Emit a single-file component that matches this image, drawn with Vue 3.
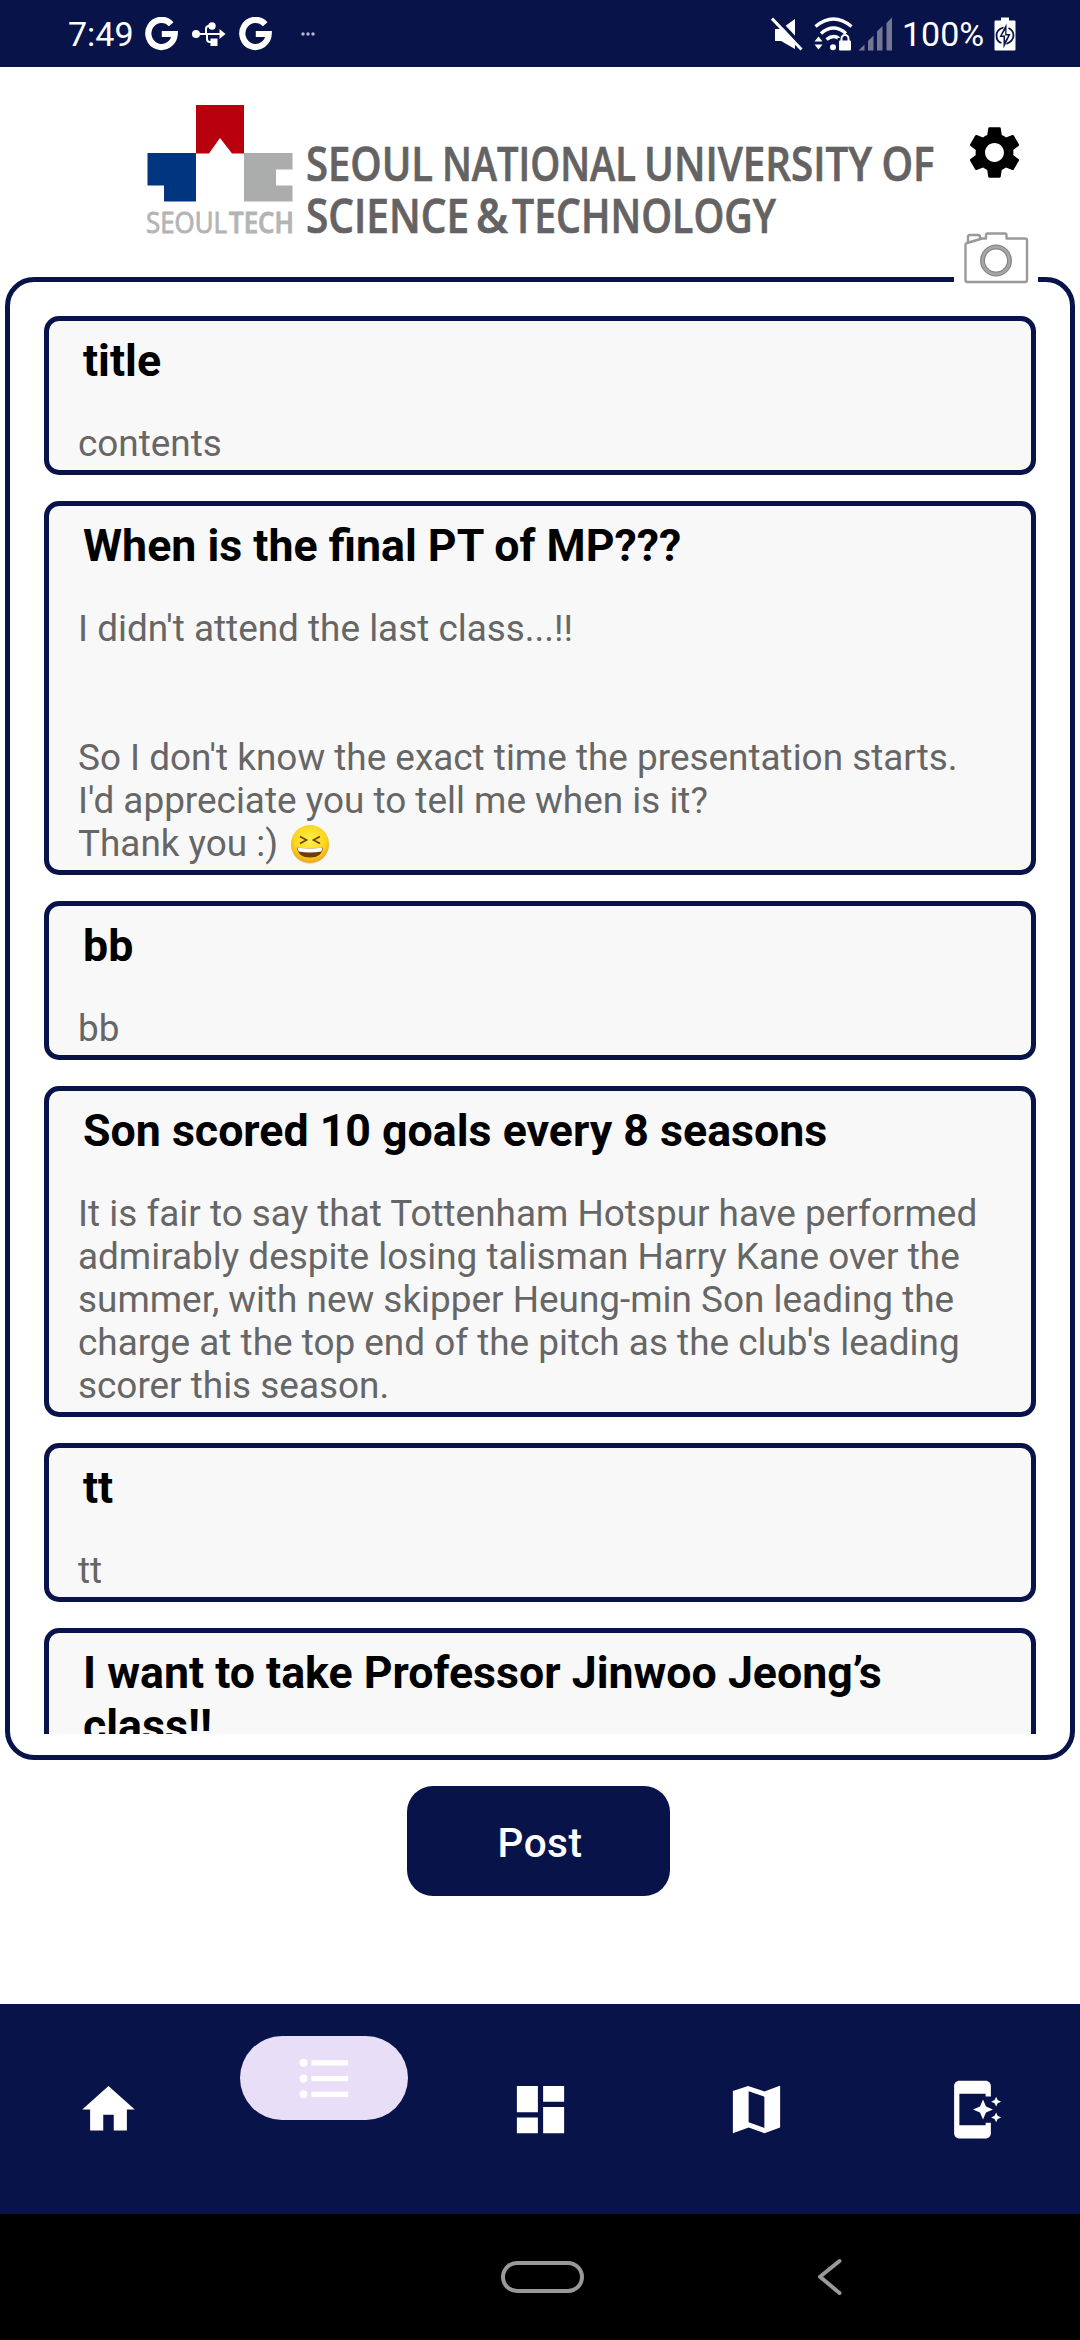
<script setup>
const posts = [
  { title: 'title', lines: ['contents'] },
  {
    title: 'When is the final PT of MP???',
    lines: [
      "I didn't attend the last class...!!",
      '',
      '',
      'So I don\'t know the exact time the presentation starts.',
      "I'd appreciate you to tell me when is it?",
      'Thank you :) '
    ],
    laugh: true
  },
  { title: 'bb', lines: ['bb'] },
  {
    title: 'Son scored 10 goals every 8 seasons',
    lines: [
      'It is fair to say that Tottenham Hotspur have performed',
      'admirably despite losing talisman Harry Kane over the',
      'summer, with new skipper Heung-min Son leading the',
      "charge at the top end of the pitch as the club's leading",
      'scorer this season.'
    ]
  },
  { title: 'tt', lines: ['tt'] },
  { title: 'I want to take Professor Jinwoo Jeong’s class!!', lines: [''] }
]

const tabs = [
  { name: 'home', d: 'M10 20v-6h4v6h5v-8h3L12 3 2 12h3v8z' },
  {
    name: 'list',
    active: true,
    d: 'M4 10.5a1.5 1.5 0 100 3 1.5 1.5 0 000-3zm0-6a1.5 1.5 0 100 3 1.5 1.5 0 000-3zm0 12a1.5 1.5 0 100 3 1.5 1.5 0 000-3zM7 19h14v-2H7v2zm0-6h14v-2H7v2zm0-8v2h14V5H7z'
  },
  { name: 'dashboard', d: 'M3 13h8V3H3v10zm0 8h8v-6H3v6zm10 0h8V11h-8v10zm0-18v6h8V3h-8z' },
  { name: 'map', d: 'M3 4.95L8.8 3 15 5.1 20.6 3a.3.3 0 01.4.3v15.6L15 21l-6-2.1L3 21zM9 5v11.9l6 2.1V7.1z' },
  {
    name: 'phone',
    d: 'M17 18H7V6h10v1h2V3c0-1.1-.9-2-2-2H7c-1.1 0-2 .9-2 2v18c0 1.1.9 2 2 2h10c1.1 0 2-.9 2-2v-4h-2v1zM16 8.2l1.15 2.65L19.8 12l-2.65 1.15L16 15.8l-1.15-2.65L12.2 12l2.65-1.15zM21 7.1l.58 1.32 1.32.58-1.32.58L21 10.9l-.58-1.32L19.1 9l1.32-.58zM21 13.1l.58 1.32 1.32.58-1.32.58L21 16.9l-.58-1.32L19.1 15l1.32-.58z'
  }
]
</script>

<template>
  <div class="screen">
    <div class="status">
      <div class="status-left">
        <span class="time">7:49</span>
        <svg class="g1" width="33" height="34" viewBox="0 0 33 34">
          <path d="M26.2 7.2A13.2 13.6 0 1 0 29.7 17H16.8" fill="none" stroke="#fff" stroke-width="6.2" />
        </svg>
        <svg class="usb" width="34" height="26" viewBox="0 0 34 26">
          <g fill="none" stroke="#fff" stroke-width="2">
            <path d="M4 13H28M14 13V8Q14 5 17 5H19M15 13V18Q15 21 18 21H20" />
          </g>
          <circle cx="4" cy="13" r="4" fill="#fff" />
          <circle cx="20" cy="5" r="3.7" fill="#fff" />
          <rect x="18.5" y="17.5" width="7" height="7.5" fill="#fff" />
          <path d="M27.5 8L33.5 13 27.5 18z" fill="#fff" />
        </svg>
        <svg class="g2" width="33" height="34" viewBox="0 0 33 34">
          <path d="M26.2 7.2A13.2 13.6 0 1 0 29.7 17H16.8" fill="none" stroke="#fff" stroke-width="6.2" />
        </svg>
        <svg class="more" width="14" height="4" viewBox="0 0 14 4" fill="#b5b9ca">
          <circle cx="2" cy="2" r="1.7" /><circle cx="7" cy="2" r="1.7" /><circle cx="12" cy="2" r="1.7" />
        </svg>
      </div>
      <div class="status-right">
        <svg width="32" height="34" viewBox="0 0 32 34">
          <path d="M4 12H10L24 2V32L10 24H4z" fill="#fff" />
          <path d="M3 -1.2L34 32" stroke="#08134a" stroke-width="3.5" />
          <path d="M1 1.5L30.5 32.5" stroke="#fff" stroke-width="3" />
        </svg>
        <svg class="wifi" width="39" height="34" viewBox="0 0 39 34">
          <g fill="none" stroke="#fff" stroke-width="3.4">
            <path d="M1.5 9.5Q19.5 -5.5 37.5 9.5M7 16.5Q19.5 5.5 32 16.5M12.5 22.5Q19.5 17 25 21.5" />
          </g>
          <circle cx="19" cy="30.2" r="3" fill="#fff" />
          <path d="M0.5 24.5L4.5 19.5 8.5 24.5zM0.5 27.5L4.5 32.5 8.5 27.5z" fill="#fff" />
          <rect x="23.5" y="21" width="14.5" height="13" fill="#08134a" />
          <rect x="25" y="23.5" width="12" height="10" rx="1" fill="#fff" />
          <path d="M27.5 24v-2.500a3.500 3.500 0 017 0V24" fill="none" stroke="#fff" stroke-width="2" />
        </svg>
        <svg class="signal" width="35" height="34" viewBox="0 0 35 34" fill="#727894">
          <path d="M0.5 33.5L6.5 27.5V33.5zM10 33.5V24L15.5 18.5V33.5zM19 33.5V14.5L24.5 9V33.5zM28.5 33.5V6L34 0.5V33.5z" />
        </svg>
        <span class="percent">100%</span>
        <svg class="battery" width="22" height="34" viewBox="0 0 22 34">
          <path d="M7 0.5H15V3.5H20.5Q21.5 3.5 21.5 4.5V32.5Q21.5 33.5 20.5 33.5H1.5Q.5 33.5.5 32.5V4.5Q.5 3.5 1.5 3.5H7z" fill="#fff" />
          <g fill="none" stroke="#08134a" stroke-width="1.8">
            <path d="M9.5 10.5Q2.500 12.500 2.500 18.500T7.500 26M14.500 11Q19.500 13.500 19.500 18.500T12.500 27" />
          </g>
          <path d="M12.500 6.500L5.500 20H9.500L9.500 31.500 16.500 17H12.500z" fill="#08134a" />
          <path d="M11.200 13L7.800 18.600H11V24L14.200 18.400H11.200z" fill="#fff" />
        </svg>
      </div>
    </div>

    <header class="header">
      <svg class="logo" width="800" height="190" viewBox="140 67 800 190">
        <path d="M196 105H244V153.500H232L220 138 209 153.500H196z" fill="#b8000e" />
        <path d="M147.500 153H196V201.500H164V185.500H147.500z" fill="#003580" />
        <path d="M244 153H292.500V169.500H276V185.500H292.500V201.500H244z" fill="#abadac" />
        <g class="mark">
          <text x="146" y="233" textLength="81" lengthAdjust="spacingAndGlyphs">SEOUL</text>
          <text x="229" y="233" textLength="65" lengthAdjust="spacingAndGlyphs" class="strong">TECH</text>
        </g>
        <g class="name">
          <text x="306" y="181" textLength="127" lengthAdjust="spacingAndGlyphs">SEOUL</text>
          <text x="442" y="181" textLength="194" lengthAdjust="spacingAndGlyphs">NATIONAL</text>
          <text x="644" y="181" textLength="228" lengthAdjust="spacingAndGlyphs">UNIVERSITY</text>
          <text x="881.500" y="181" textLength="53" lengthAdjust="spacingAndGlyphs">OF</text>
          <text x="306" y="232.500" textLength="163" lengthAdjust="spacingAndGlyphs">SCIENCE</text>
          <text x="476" y="232.500" textLength="32" lengthAdjust="spacingAndGlyphs">&amp;</text>
          <text x="512" y="232.500" textLength="264" lengthAdjust="spacingAndGlyphs">TECHNOLOGY</text>
        </g>
      </svg>
      <svg class="gear" width="63" height="63" viewBox="0 0 24 24">
        <path d="M19.140 12.940c.04-.3.060-.61.060-.94 0-.32-.02-.64-.07-.94l2.030-1.580c.18-.14.230-.41.120-.61l-1.920-3.320c-.12-.22-.37-.29-.59-.22l-2.390.96c-.5-.38-1.030-.7-1.620-.94l-.36-2.540c-.04-.24-.24-.41-.48-.41h-3.840c-.24 0-.43.170-.47.410l-.36 2.540c-.59.240-1.130.570-1.620.94l-2.390-.96c-.22-.08-.47 0-.59.220L2.740 8.870c-.12.210-.08.470.12.610l2.030 1.580c-.05.3-.09.630-.09.940s.02.640.07.940l-2.030 1.580c-.18.140-.23.410-.12.610l1.920 3.320c.12.220.37.290.59.220l2.390-.96c.5.380 1.030.7 1.620.94l.36 2.540c.05.240.24.410.48.410h3.840c.24 0 .44-.17.470-.41l.36-2.540c.59-.24 1.130-.56 1.620-.94l2.390.96c.22.080.47 0 .59-.22l1.920-3.320c.12-.22.070-.47-.12-.61l-2.010-1.580zM12 15.600c-1.980 0-3.600-1.620-3.600-3.600s1.620-3.600 3.600-3.600 3.600 1.620 3.600 3.600-1.620 3.600-3.600 3.600z" />
      </svg>
    </header>

    <main class="panel">
      <svg class="camera" width="84" height="62" viewBox="954 228 84 62">
        <rect x="954" y="228" width="84" height="62" fill="#fff" />
        <g fill="none" stroke="#999" stroke-width="2.4" stroke-linejoin="round">
          <path d="M965.500 243.500V280Q965.500 282 967.500 282H1025Q1027 282 1027 280V240.500Q1027 238.500 1025 238.500H1006.500V235Q1006.500 233.500 1005 233.500H987.500Q986 233.500 986 235V238.500H982L965.500 243.500" />
          <path d="M968 242V237Q968 235 970 235H978Q980 235 980 237V239" />
        </g>
        <circle cx="996" cy="260.500" r="13.500" fill="none" stroke="#888" stroke-width="5" />
        <circle cx="996" cy="260.500" r="13.500" fill="none" stroke="#a6a6a6" stroke-width="2.500" />
      </svg>
      <div class="feed">
        <article v-for="post in posts" :key="post.title" class="card">
          <h2 class="title">{{ post.title }}</h2>
          <p v-for="(line, i) in post.lines" :key="i" class="line">{{ line }}<svg
              v-if="post.laugh && i === post.lines.length - 1"
              class="emoji" width="40" height="41" viewBox="0 0 40 41">
              <defs>
                <radialGradient id="face" cx=".5" cy=".4" r=".6">
                  <stop offset="0" stop-color="#fff04a" />
                  <stop offset=".7" stop-color="#fcd51d" />
                  <stop offset="1" stop-color="#eda512" />
                </radialGradient>
              </defs>
              <circle cx="20" cy="21" r="19" fill="#ddd" />
              <circle cx="20" cy="20" r="19" fill="url(#face)" />
              <path d="M10 12.500L16.500 16 10 19.500M30 12.500L23.500 16 30 19.500" fill="none" stroke="#70400c" stroke-width="1.700" />
              <path d="M7 23.500Q20 25.500 33 23.500Q32 33.500 20 33.500T7 23.500z" fill="#6b3d08" />
              <path d="M7.500 23.500Q20 25.500 32.500 23.500L31.500 27.500Q20 29.500 8.500 27.500z" fill="#fff" />
            </svg></p>
        </article>
      </div>
    </main>

    <div class="actions">
      <button class="post">Post</button>
    </div>

    <nav class="tabs">
      <div v-for="tab in tabs" :key="tab.name" class="tab" :class="{ active: tab.active }">
        <span class="pill">
          <svg width="63" height="63" viewBox="0 0 24 24" fill="#fff" fill-rule="evenodd"><path :d="tab.d" /></svg>
        </span>
      </div>
    </nav>

    <div class="system">
      <span class="home-key"></span>
      <svg width="26" height="38" viewBox="0 0 26 38">
        <path d="M22.500 3L3 18.700 22.500 35" fill="none" stroke="#999" stroke-width="4" stroke-linecap="round" stroke-linejoin="round" />
      </svg>
    </div>
  </div>
</template>

<style>
body {
  margin: 0;
  background: #fff;
}
</style>

<style scoped>
.screen {
  width: 1080px;
  height: 2340px;
  display: flex;
  flex-direction: column;
  overflow: hidden;
  background: #fff;
  font-family: Roboto, sans-serif;
}
svg {
  display: block;
  flex: none;
}
.status {
  box-sizing: border-box;
  height: 67px;
  flex: none;
  display: flex;
  justify-content: space-between;
  padding: 0 64px 0 68px;
  background: #08134a;
  color: #fff;
  font-size: 34px;
}
.status-left,
.status-right {
  display: flex;
  align-items: center;
}
.time {
  width: 77px;
  line-height: 68px;
}
.usb {
  margin-left: 14px;
}
.g2 {
  margin-left: 13px;
}
.more {
  margin-left: 29px;
}
.wifi {
  margin-left: 11px;
}
.signal {
  margin-left: 5px;
}
.percent {
  width: 81px;
  margin-left: 9px;
  line-height: 68px;
}
.battery {
  margin-left: 11px;
}
.header {
  height: 210px;
  flex: none;
  display: flex;
  align-items: flex-start;
}
.logo {
  margin-left: 140px;
}
.mark {
  font-family: "Open Sans", sans-serif;
  font-size: 28.5px;
  font-weight: 400;
  fill: #b3b5b4;
  stroke: #b3b5b4;
  stroke-width: 0.9px;
}
.strong {
  font-weight: 600;
}
.name {
  font-family: "Open Sans", sans-serif;
  font-size: 47.5px;
  font-weight: 600;
  fill: #646262;
  stroke: #646262;
  stroke-width: 0.7px;
}
.gear {
  margin: 54px 0 0 23px;
}
.panel {
  position: relative;
  box-sizing: border-box;
  height: 1483px;
  flex: none;
  margin: 0 5px;
  padding: 34px 34px 21px;
  border: 5px solid #08134a;
  border-radius: 29px;
}
/* the camera button straddles the panel's top edge */
.camera {
  position: absolute;
  top: -54px;
  right: 32px;
}
.feed {
  height: 1418px;
  display: flex;
  flex-direction: column;
  gap: 26px;
  overflow: hidden;
}
.card {
  flex: none;
  border: 5px solid #08134a;
  border-radius: 15px;
  padding: 14px 24px 5px 29px;
  background: #f8f8f8;
}
.title {
  margin: 0 0 34px;
  padding-left: 5px;
  font-size: 44.7px;
  font-weight: 700;
  line-height: 53px;
  color: #000;
}
.line {
  height: 43px;
  margin: 0;
  font-size: 36.9px;
  line-height: 43px;
  color: #666;
  white-space: pre;
}
.emoji {
  display: inline-block;
  margin-left: 3px;
  vertical-align: -9px;
}
.actions {
  height: 244px;
  flex: none;
  display: flex;
  justify-content: center;
  align-items: flex-start;
}
.post {
  width: 263px;
  height: 110px;
  margin: 26px 3px 0 0;
  padding: 4px 0 0 3px;
  border: 0;
  border-radius: 26px;
  background: #08134a;
  color: #fff;
  font-family: Roboto, sans-serif;
  font-size: 40.5px;
  font-weight: 500;
  letter-spacing: 0.5px;
}
.tabs {
  height: 210px;
  flex: none;
  display: flex;
  background: #08134a;
}
.tab {
  flex: 1;
  display: flex;
  justify-content: center;
  align-items: center;
}
.pill {
  width: 168px;
  height: 84px;
  display: flex;
  justify-content: center;
  align-items: center;
  border-radius: 42px;
}
.active {
  align-items: flex-start;
  padding-top: 32px;
}
.active .pill {
  background: #e8def8;
}
.system {
  flex: 1;
  display: flex;
  align-items: center;
  padding-left: 501px;
  background: #000;
}
.home-key {
  box-sizing: border-box;
  width: 83px;
  height: 32px;
  margin-right: 233px;
  border: 4px solid #999;
  border-radius: 16px;
}
</style>
